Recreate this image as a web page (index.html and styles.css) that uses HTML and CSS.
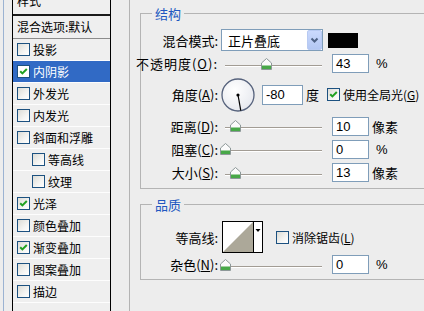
FILE: index.html
```html
<!DOCTYPE html>
<html lang="zh-CN">
<head>
<meta charset="utf-8">
<title>图层样式</title>
<link rel="stylesheet" href="styles.css">
</head>
<body>
<svg class="defs" width="0" height="0" aria-hidden="true">
  <defs>
    <symbol id="thumb" viewBox="0 0 11 12">
      <path d="M0.5 11.5V5L5.5 0.5L10.5 5V11.5Z" fill="#fbfbfb" stroke="#8d9898"/>
      <rect x="1" y="7.5" width="9" height="3.5" fill="#48a848"/>
    </symbol>
    <symbol id="tick" viewBox="0 0 11 11">
      <path d="M2.2 5.2L4.4 7.4L8.8 3" fill="none" stroke="#21a121" stroke-width="2"/>
    </symbol>
  </defs>
</svg>
<div class="dialog">
  <div class="edge"></div>
  <div class="list">
    <div class="item top"><span>样式</span></div>
    <div class="item blend">混合选项:默认</div>
    <div class="item"><i class="cb"></i>投影</div>
    <div class="item sel"><i class="cb"><svg width="11" height="11"><use href="#tick"/></svg></i>内阴影</div>
    <div class="item"><i class="cb"></i>外发光</div>
    <div class="item"><i class="cb"></i>内发光</div>
    <div class="item"><i class="cb"></i>斜面和浮雕</div>
    <div class="item sub"><i class="cb"></i>等高线</div>
    <div class="item sub"><i class="cb"></i>纹理</div>
    <div class="item"><i class="cb"><svg width="11" height="11"><use href="#tick"/></svg></i>光泽</div>
    <div class="item"><i class="cb"></i>颜色叠加</div>
    <div class="item"><i class="cb"><svg width="11" height="11"><use href="#tick"/></svg></i>渐变叠加</div>
    <div class="item"><i class="cb"></i>图案叠加</div>
    <div class="item"><i class="cb"></i>描边</div>
  </div>
  <div class="panel">
    <fieldset class="group g1">
      <legend>结构</legend>
      <div class="body">
        <div class="row r1">
          <div class="lbl">混合模式:</div>
          <div class="select">正片叠底<span class="arrow"><svg width="13" height="18" viewBox="0 0 13 18"><path d="M3.5 7.5L6.5 10.5L9.5 7.5" fill="none" stroke="#4d6185" stroke-width="2"/></svg></span></div>
          <div class="swatch"></div>
        </div>
        <div class="row r2">
          <div class="lbl wide">不透明度(<u>O</u>):</div>
          <div class="slider"><svg class="thumb" style="margin-left:41px" width="11" height="12"><use href="#thumb"/></svg></div>
          <div class="num">43</div>
          <div class="unit pct">%</div>
        </div>
        <div class="row r3">
          <div class="lbl">角度(<u>A</u>):</div>
          <svg class="dial" width="34" height="34" viewBox="0 0 34 34">
            <defs><radialGradient id="dg" cx="0.4" cy="0.35" r="0.7"><stop offset="0" stop-color="#ffffff"/><stop offset="1" stop-color="#e6e8ee"/></radialGradient></defs>
            <circle cx="17" cy="17" r="16" fill="url(#dg)" stroke="#56627c" stroke-width="1.3"/>
            <line x1="17" y1="17" x2="19.8" y2="32.6" stroke="#000" stroke-width="1.2"/>
            <circle cx="17" cy="17" r="1.6" fill="#000"/>
          </svg>
          <div class="num angle">-80</div>
          <div class="unit deg">度</div>
          <i class="cb global"><svg width="11" height="11"><use href="#tick"/></svg></i>
          <div class="cblabel">使用全局光(<u>G</u>)</div>
        </div>
        <div class="row r4">
          <div class="lbl">距离(<u>D</u>):</div>
          <div class="slider"><svg class="thumb" style="margin-left:10px" width="11" height="12"><use href="#thumb"/></svg></div>
          <div class="num">10</div>
          <div class="unit px">像素</div>
        </div>
        <div class="row r5">
          <div class="lbl">阻塞(<u>C</u>):</div>
          <div class="slider"><svg class="thumb" style="margin-left:0px" width="11" height="12"><use href="#thumb"/></svg></div>
          <div class="num">0</div>
          <div class="unit pct">%</div>
        </div>
        <div class="row r6">
          <div class="lbl">大小(<u>S</u>):</div>
          <div class="slider"><svg class="thumb" style="margin-left:10px" width="11" height="12"><use href="#thumb"/></svg></div>
          <div class="num">13</div>
          <div class="unit px">像素</div>
        </div>
      </div>
    </fieldset>
    <fieldset class="group g2">
      <legend>品质</legend>
      <div class="body">
        <div class="row q1">
          <div class="lbl">等高线:</div>
          <div class="contour">
            <svg class="curve" width="30" height="30" viewBox="0 0 30 30"><polygon points="0,30 30,0 30,30" fill="#aca899"/></svg>
            <div class="drop"><svg width="8" height="30" viewBox="0 0 8 30"><polygon points="1.5,7 6.5,7 4,10" fill="#000"/></svg></div>
          </div>
          <i class="cb aa"></i>
          <div class="cblabel">消除锯齿(<u>L</u>)</div>
        </div>
        <div class="row q2">
          <div class="lbl">杂色(<u>N</u>):</div>
          <div class="slider"><svg class="thumb" style="margin-left:0px" width="11" height="12"><use href="#thumb"/></svg></div>
          <div class="num">0</div>
          <div class="unit pct">%</div>
        </div>
      </div>
    </fieldset>
  </div>
</div>
</body>
</html>
```
FILE: styles.css
```css
* { box-sizing: border-box; }
html, body { margin: 0; padding: 0; }
body {
  width: 424px;
  height: 311px;
  overflow: hidden;
  background: #ededed;
  font-family: "Noto Sans CJK SC", "Liberation Sans", sans-serif;
  font-size: 13px;
  color: #000;
}
.defs { position: absolute; width: 0; height: 0; }
.dialog { display: flex; height: 311px; }
.edge {
  flex: none;
  margin-left: 3px;
  width: 9px;
  border-left: 1px solid #9cb3d2;
}
.list {
  flex: none;
  width: 99px;
  border-left: 1px solid #000;
  border-right: 1px solid #000;
  background: #efefef;
  font-size: 12px;
  line-height: 14px;
}
.item {
  display: flex;
  align-items: center;
  height: 22px;
  padding-left: 4px;
  border-bottom: 1px solid #fdfdfd;
  white-space: nowrap;
}
.item.top {
  height: 16px;
  align-items: flex-start;
  border-bottom: 2px solid #1a1a1a;
  overflow: hidden;
}
.item.top span { margin-top: -6px; }
.item.blend {
  height: 23px;
  border-bottom: 1px solid #8c8c8c;
}
.item.sub { padding-left: 19px; }
.item.sel { background: #316ac5; color: #fff; }
.cb {
  flex: none;
  width: 13px;
  height: 13px;
  margin-right: 3px;
  border: 1px solid #1c5180;
  background: linear-gradient(135deg, #dcdcd6 0%, #f4f4f2 60%, #ffffff 100%);
  display: flex;
  align-items: center;
  justify-content: center;
}
.item.sel .cb { background: #fff; }
.cb svg { display: block; }

.panel {
  flex: 1;
  min-width: 0;
  margin-left: 18px;
  border-left: 1px solid #b3b3b3;
  padding: 6px 0 0 10px;
}
.group {
  margin: 0 -40px 0 0;
  padding: 0;
  min-width: 0;
  border: 1px solid #b4b4b4;
}
.group legend {
  margin-left: 11px;
  padding: 0 3px;
  color: #2157c0;
  font-size: 13px;
  line-height: 15px;
}
.g1 .body { padding: 8px 0 2px; }
.g2 { margin-top: 8px; }
.g2 .body { padding: 9px 0 3px; }
.row { display: flex; align-items: center; white-space: nowrap; }
.r1 { height: 22px; }
.r2 { height: 25px; }
.r3 { height: 37px; }
.r4 { height: 26px; }
.r5 { height: 20px; }
.r6 { height: 27px; }
.q1 { height: 32px; }
.q2 { height: 23px; }
.lbl {
  flex: none;
  width: 77px;
  display: flex;
  justify-content: flex-end;
  line-height: 15px;
}
.lbl.wide { letter-spacing: 1px; }
.select {
  flex: none;
  width: 102px;
  height: 22px;
  margin-left: 3px;
  border: 1px solid #7f9db9;
  background: #fff;
  display: flex;
  align-items: center;
  padding-left: 6px;
}
.select .arrow {
  margin-left: auto;
  width: 15px;
  height: 20px;
  border: 1px solid #b8caf2;
  border-radius: 2px;
  background: linear-gradient(#cad9fd, #b3c7f3);
  display: flex;
  align-items: center;
  justify-content: center;
}
.swatch {
  flex: none;
  width: 30px;
  height: 15px;
  margin-left: 5px;
  background: #000;
}
.slider {
  flex: none;
  width: 103px;
  height: 14px;
  margin-left: 2px;
  display: flex;
  align-items: flex-start;
  background:
    linear-gradient(#a29c94, #a29c94) 5px 8px / 97px 1px no-repeat,
    linear-gradient(#ffffff, #ffffff) 5px 9px / 97px 1px no-repeat;
}
.thumb { flex: none; display: block; margin-top: 1px; }
.num {
  flex: none;
  width: 37px;
  height: 19px;
  margin-left: 9px;
  border: 1px solid #7f9db9;
  background: #fff;
  padding-left: 3px;
  font-family: "Liberation Sans", sans-serif;
  font-size: 13px;
  line-height: 17px;
}
.unit.pct { margin-left: 7px; font-family: "Liberation Sans", sans-serif; }
.unit.px { margin-left: 3px; }
.dial { flex: none; display: block; margin-left: 3px; }
.num.angle { width: 41px; height: 20px; margin-left: 7px; line-height: 18px; }
.unit.deg { margin-left: 3px; }
.cb.global { margin-left: 8px; margin-right: 3px; }
.cblabel { line-height: 15px; font-size: 12px; }
.contour {
  flex: none;
  display: flex;
  margin-left: 4px;
  height: 32px;
  border: 1px solid #000;
  background: #fff;
}
.curve { display: block; }
.drop {
  width: 9px;
  border-left: 1px solid #000;
  background: #fff;
}
.drop svg { display: block; }
.cb.aa { margin-left: 13px; margin-right: 3px; }
```
